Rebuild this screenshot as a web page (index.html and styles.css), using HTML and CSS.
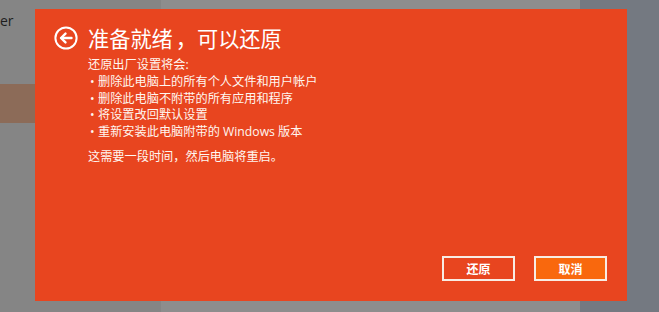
FILE: index.html
```html
<!DOCTYPE html>
<html lang="zh-CN">
<head>
<meta charset="utf-8">
<title>准备就绪，可以还原</title>
<link rel="stylesheet" href="styles.css">
</head>
<body>
<div class="desktop">
  <div class="pane-left">
    <div class="pane-label">er</div>
    <div class="pane-selected"></div>
  </div>
  <div class="pane-main"></div>
  <div class="pane-right"></div>
</div>

<div class="dialog">
  <div class="dialog-header">
    <svg class="back-icon" width="24" height="24" viewBox="0 0 24 24" aria-hidden="true">
      <circle cx="12" cy="12" r="10.6" fill="none" stroke="#fff" stroke-width="2"/>
      <path d="M17.5 12 H7.5" fill="none" stroke="#fff" stroke-width="2.4" stroke-linecap="round"/>
      <path d="M11.5 7.6 L7 12 L11.5 16.4" fill="none" stroke="#fff" stroke-width="2.4" stroke-linecap="round" stroke-linejoin="round"/>
    </svg>
    <h1 class="dialog-title">准备就绪<span class="comma">，</span>可以还原</h1>
  </div>
  <div class="dialog-body">
    <p class="intro">还原出厂设置将会:</p>
    <ul class="list">
      <li>删除此电脑上的所有个人文件和用户帐户</li>
      <li>删除此电脑不附带的所有应用和程序</li>
      <li>将设置改回默认设置</li>
      <li>重新安装此电脑附带的 Windows 版本</li>
    </ul>
    <p class="note">这需要一段时间，然后电脑将重启。</p>
  </div>
  <div class="dialog-footer">
    <button class="btn">还原</button>
    <button class="btn btn-primary">取消</button>
  </div>
</div>
</body>
</html>
```

FILE: styles.css
```css
html, body {
  margin: 0;
  padding: 0;
  width: 659px;
  height: 312px;
  overflow: hidden;
}

body {
  font-family: "Open Sans", "Noto Sans CJK SC", sans-serif;
  position: relative;
}

.desktop {
  display: flex;
  width: 659px;
  height: 312px;
}

.pane-left {
  width: 161px;
  background: #858585;
  display: flex;
  flex-direction: column;
}

.pane-label {
  height: 41px;
  margin-left: 0;
  font-size: 14px;
  line-height: 41px;
  color: #1e1e1e;
  margin-bottom: 43px;
}

.pane-selected {
  height: 39px;
  background: #8c6b58;
}

.pane-main {
  width: 419px;
  background: #8d8d8d;
}

.pane-right {
  flex: 1;
  background: #747981;
}

.dialog {
  position: absolute;
  left: 35px;
  top: 9px;
  width: 592px;
  height: 292px;
  box-sizing: border-box;
  padding: 14px 20px 20px 19px;
  background: #e8451f;
  color: #fff;
  display: flex;
  flex-direction: column;
}

.dialog-header {
  display: flex;
  align-items: center;
  gap: 10px;
  height: 30px;
}

.back-icon {
  display: block;
  flex: none;
}

.dialog-title {
  margin: 0;
  font-family: "Noto Sans CJK SC", sans-serif;
  font-weight: 400;
  font-size: 21.2px;
  line-height: 30px;
  color: #fff;
  white-space: nowrap;
}

.comma {
  padding-left: 3px;
}

.dialog-body {
  flex: 1;
  margin-top: 4px;
  padding-left: 34px;
  font-family: "Open Sans", "Noto Sans CJK SC", sans-serif;
  font-size: 12.2px;
  line-height: 16.75px;
  color: #fff6f0;
}

.intro {
  margin: 0;
}

.list {
  margin: 0;
  padding: 0;
  list-style: none;
}

.list li {
  position: relative;
  padding-left: 10px;
}

.list li::before {
  content: "•";
  position: absolute;
  left: 2px;
  top: 0;
}

.note {
  margin: 8px 0 0;
}

.dialog-footer {
  display: flex;
  justify-content: flex-end;
  gap: 19px;
}

.btn {
  width: 73px;
  height: 25px;
  box-sizing: border-box;
  border: 2px solid #f8ece4;
  background: transparent;
  color: #fff;
  font-family: "Noto Sans CJK SC", sans-serif;
  font-size: 12px;
  font-weight: 700;
  padding: 0;
  line-height: 21px;
}

.btn-primary {
  background: #f9680d;
}
```
